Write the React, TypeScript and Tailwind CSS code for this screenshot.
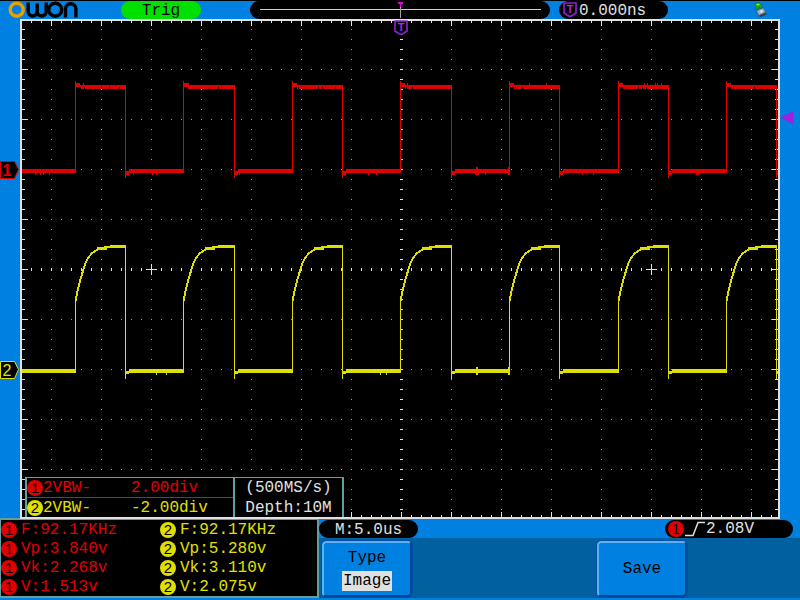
import React from "react";

const MONO = "font-['Liberation_Mono',monospace] text-[16px] leading-[20px] whitespace-pre";

const RED = "#e00000";
const YELLOW = "#e0e000";
const LIGHT = "#e0e0e0";

type Edge = { rise: number; fall: number };

const edges: Edge[] = [
  { rise: 75, fall: 125 },
  { rise: 183, fall: 234 },
  { rise: 292, fall: 342 },
  { rise: 400, fall: 451 },
  { rise: 509, fall: 559 },
  { rise: 618, fall: 668 },
  { rise: 726, fall: 776 },
];

const range = (from: number, to: number, step: number) => {
  const out: number[] = [];
  for (let v = from; v <= to; v += step) out.push(v);
  return out;
};

const box = (x: number, y: number, w: number, h: number) => `M${x} ${y}h${w}v${h}h${-w}z`;

const xs = range(31, 771, 10);
const ys = range(29, 509, 10);
const columns = range(51, 751, 50);
const rows = range(69, 469, 50);

const dots = [
  ...columns.filter((x) => x !== 401).flatMap((x) => ys.map((y) => box(x, y, 1, 1))),
  ...rows.filter((y) => y !== 269).flatMap((y) => xs.map((x) => box(x, y, 1, 1))),
].join("");

const ticks = [
  ...xs.map((x) => box(x, 268, 1, 3)),
  ...ys.map((y) => box(400, y, 3, 1)),
  ...xs.map((x) => box(x, 21, 1, columns.includes(x) ? 5 : 2)),
  ...xs.map((x) => box(x, columns.includes(x) ? 512 : 515, 1, columns.includes(x) ? 5 : 2)),
  ...ys.map((y) => box(22, y, rows.includes(y) ? 6 : 3, 1)),
  ...ys.map((y) => box(rows.includes(y) ? 772 : 775, y, rows.includes(y) ? 6 : 3, 1)),
  ...[151, 651].map((x) => box(x - 5, 269, 11, 1) + box(x, 264, 1, 11)),
].join("");

const lowSegments = edges.map((e, i) => {
  const start = i === 0 ? 22 : edges[i - 1].fall + 4;
  return { start, width: e.rise - start };
});

const redTrace = [
  ...lowSegments.map((s) => box(s.start, 169, s.width, 4)),
  ...edges.map(
    (e) =>
      box(e.rise, 81, 1, 92) +
      box(e.rise, 83, 5, 4) +
      box(e.rise + 5, 85, e.fall - e.rise - 4, 4) +
      box(e.fall, 85, 1, 93) +
      box(e.fall, 171, e.fall > 770 ? 2 : 4, 4),
  ),
  ...[35, 40, 43, 49, 133, 152, 156, 239, 368, 376, 485, 582, 593, 696, 698].map((x) => box(x, 173, 1, 2)),
  ...[83, 188, 407, 529, 546, 644, 647, 655, 657, 661].map((x) => box(x, 83, 1, 2)),
  box(476, 167, 2, 2),
  box(475, 173, 4, 2),
  box(508, 167, 2, 8),
].join("");

const redGaps = [80, 84, 101, 109, 119, 218, 298, 318, 322, 335, 406, 412, 515, 517, 522, 622, 638, 642, 646, 651, 733, 754]
  .map((x) => box(x, 87, 1, 2))
  .join("");

const yellowTrace = [
  ...lowSegments.map((s) => box(s.start, 369, s.width, 4)),
  ...edges.map(
    (e) =>
      box(e.rise, 296, 1, 77) +
      box(e.rise, 296, 2, 5) +
      box(e.rise + 22, 247, 10, 3) +
      box(e.rise + 30, 246, e.fall - e.rise - 29, 2) +
      box(e.rise + 35, 245, e.fall - e.rise - 34, 3) +
      box(e.fall, 247, 1, 132) +
      box(e.fall, 371, e.fall > 770 ? 2 : 4, 3),
  ),
  box(476, 367, 2, 8),
  box(508, 367, 2, 8),
  box(156, 373, 1, 2),
  box(166, 373, 1, 2),
  box(380, 373, 1, 2),
  box(386, 373, 1, 2),
].join("");

const chargeCurve = edges
  .map((e) => `M${e.rise + 1} 298l2 -9l2 -8l3 -10l2 -7l3 -6l4 -5l5 -3l5 -2l5 -1`)
  .join("");

function Shield({ x, y }: { x: number; y: number }) {
  return (
    <g transform={`translate(${x} ${y})`}>
      <path d="M1 1h12v10l-3 2l-3 1.5l-3 -1.5l-3 -2z" fill="#000" stroke="#9020d8" strokeWidth="1.6" />
      <text x="7" y="11" textAnchor="middle" fontSize="11" fontWeight="bold" fontFamily="Liberation Sans, sans-serif" fill="#a828e8">
        T
      </text>
    </g>
  );
}

function ChannelFlag({ y, label, color }: { y: number; label: string; color: string }) {
  return (
    <g>
      <path d={`M0.5 ${y + 0.5}h14l4 8l-4 9h-14z`} fill="#000" stroke={color} />
      <text x="7" y={y + 15} textAnchor="middle" fontSize="16" fontWeight={label === "1" ? "bold" : "normal"} fontFamily="Liberation Sans, sans-serif" fill={color}>
        {label}
      </text>
    </g>
  );
}

function Plot() {
  return (
    <svg viewBox="0 19 800 500" className="block h-auto w-full" role="img" aria-label="Channel waveforms">
      <rect x="20" y="19" width="760" height="500" fill={LIGHT} />
      <rect x="22" y="21" width="756" height="496" fill="#000" />
      <g shapeRendering="crispEdges">
        <path d={dots} fill="#a0a0a0" />
        <path d={ticks} fill={LIGHT} />
        <path d={redTrace} fill={RED} />
        <path d={redGaps} fill="#000" />
        <path d={yellowTrace} fill={YELLOW} />
        <path d={chargeCurve} fill="none" stroke={YELLOW} strokeWidth="2" />
      </g>
      <Shield x={394} y={20} />
      <ChannelFlag y={161} label="1" color={RED} />
      <ChannelFlag y={361} label="2" color={YELLOW} />
      <path d="M780 117.500L793 111.500V124z" fill="#a020e0" stroke="#6040e0" strokeWidth="0.5" />
    </svg>
  );
}

function Badge({ channel }: { channel: 1 | 2 }) {
  return (
    <span
      className={
        "flex h-4 w-4 shrink-0 items-center justify-center rounded-full font-['Liberation_Sans',sans-serif] text-[15px] leading-4 text-black " +
        (channel === 1 ? "bg-[#e00000]" : "bg-[#e0e000]")
      }
    >
      {channel}
    </span>
  );
}

function Logo() {
  return (
    <svg viewBox="8 1 71 18" className="h-[18px] w-[71px]" fill="none" stroke="#000" strokeWidth="3.4" role="img" aria-label="OWON">
      <circle cx="16.700" cy="9.700" r="6.500" stroke="#e8a000" />
      <path d="M28.200 2.500v9a4.500 4.500 0 0 0 9 0v-8v8a4.500 4.500 0 0 0 9 0v-9" />
      <circle cx="55.200" cy="9.700" r="6.500" />
      <path d="M65.500 17.500v-8.500a5.200 5.200 0 0 1 10.400 0v8.500" />
    </svg>
  );
}

function Header() {
  return (
    <header className="grid h-[19px] grid-cols-[1fr_300px_1fr] border-t border-black bg-[#0080e0]">
      <div className="flex h-[18px] items-center gap-[42px] pl-2">
        <Logo />
        <div className={"h-[18px] w-20 rounded-full bg-[#00e000] text-center text-black " + MONO}>Trig</div>
      </div>
      <div className="h-[18px] rounded-full bg-black">
        <svg viewBox="250 1 300 18" className="block h-[18px] w-full" shapeRendering="crispEdges" aria-hidden="true">
          <path d="M260 9h281v1h-281z" fill="#e0e040" />
          <path d="M400 4h1v14h-1z" fill="#a0a0a0" />
          <path d="M398 2h5v2h-5zM400 4h1v3h-1z" fill="#e000e0" />
        </svg>
      </div>
      <div className="flex h-[18px] items-center justify-between pr-8 pl-[9px]">
        <div className="flex h-[18px] w-[109px] gap-0.5 rounded-full bg-black pl-1 text-[#e0e0e0]">
          <svg viewBox="0 0 14 16" className="mt-px h-4 w-3.5 shrink-0" aria-hidden="true">
            <Shield x={0} y={0} />
          </svg>
          <span className={MONO}>0.000ns</span>
        </div>
        <svg viewBox="0 0 15 16" className="h-4 w-[15px]" aria-hidden="true">
          <path d="M3 9L10 5L14 12L7 15.500z" fill="#506078" />
          <path d="M4 9L10 6L12 10L6 13z" fill="#a8b0c0" />
          <path d="M7 9l2 -1l1 2l-2 1z" fill="#e8e8f0" />
          <path d="M6 14l7 -3l1 1l-6 3z" fill="#303848" />
          <path d="M1 2L6 0.500L9 3V7L6 5L5 8L2 6L3 4z" fill="#20a818" stroke="#106010" strokeWidth="0.5" />
          <path d="M3 2L6 1.500L7 3L4 3.500z" fill="#80f050" />
        </svg>
      </div>
    </header>
  );
}

function ScaleInfo() {
  return (
    <div className="absolute bottom-0.5 left-[25px] flex h-10 border-t border-[#60a0a0]">
      <div className="w-[210px] border-x-2 border-[#60a0a0] bg-black">
        <div className="flex h-5 items-center border-b border-[#0060a0] text-[#e00000]">
          <Badge channel={1} />
          <span className={"w-[88px] " + MONO}>2VBW-</span>
          <span className={MONO}>2.00div</span>
        </div>
        <div className="flex h-[19px] items-center text-[#e0e000]">
          <Badge channel={2} />
          <span className={"w-[88px] " + MONO}>2VBW-</span>
          <span className={MONO}>-2.00div</span>
        </div>
      </div>
      <div className={"w-[109px] border-r-2 border-[#60a0a0] bg-black text-center text-[#e0e0e0] " + MONO}>
        <div className="h-5">(500MS/s)</div>
        <div>Depth:10M</div>
      </div>
    </div>
  );
}

const measurements: [string, string][] = [
  ["F:92.17KHz", "F:92.17KHz"],
  ["Vp:3.840v", "Vp:5.280v"],
  ["Vk:2.268v", "Vk:3.110v"],
  ["V:1.513v", "V:2.075v"],
];

function Measurements() {
  return (
    <div className="w-[319px] shrink-0 border-y-2 border-r-2 border-l border-[#60a0a0] bg-black">
      <table className="w-full table-fixed border-collapse">
        <tbody>
          {measurements.map(([first, second]) => (
            <tr key={first} className="h-[19px]">
              <td className="p-0">
                <div className="flex h-[19px] items-center gap-1 text-[#e00000]">
                  <Badge channel={1} />
                  <span className={MONO}>{first}</span>
                </div>
              </td>
              <td className="p-0">
                <div className="flex h-[19px] items-center gap-1 pl-px text-[#e0e000]">
                  <Badge channel={2} />
                  <span className={MONO}>{second}</span>
                </div>
              </td>
            </tr>
          ))}
        </tbody>
      </table>
    </div>
  );
}

const MENU_BUTTON =
  "flex h-14 w-[90px] flex-col items-center justify-center rounded-sm border-2 border-t-[#60b0f0] border-l-[#60b0f0] border-r-[#004890] border-b-[#004890] bg-[#0080e0] text-black outline-1 outline-[#0050b0] ";

function Footer() {
  return (
    <footer className="flex h-[81px] bg-[#0080e0]">
      <div className="-mt-px flex h-20">
        <Measurements />
      </div>
      <div className="flex flex-1 flex-col">
        <div className="flex h-[19px] justify-between pt-px pr-[7px]">
          <div className={"h-[18px] w-[99px] rounded-full bg-black text-center text-[#e0e0e0] " + MONO}>M:5.0us</div>
          <div className="flex h-[18px] w-32 items-center rounded-full bg-black pl-[3px] text-[#e0e0e0]">
            <Badge channel={1} />
            <svg viewBox="0 0 22 18" className="h-[18px] w-[22px] shrink-0" aria-hidden="true">
              <path d="M1 15.500H9L14 2.500H21" fill="none" stroke="#e0e0e0" strokeWidth="1.500" />
            </svg>
            <span className={MONO}>2.08V</span>
          </div>
        </div>
        <div className="grid h-[60px] grid-cols-[275px_1fr] items-end bg-[#0060a0] pb-px pl-[3px]">
          <button type="button" className={MENU_BUTTON + MONO}>
            <span className="h-[23px]">Type</span>
            <span className="h-5 bg-[#e0e0e0] px-px">Image</span>
          </button>
          <button type="button" className={MENU_BUTTON + MONO}>
            Save
          </button>
        </div>
      </div>
    </footer>
  );
}

export default function App() {
  return (
    <main className="min-h-screen bg-[#0080e0]">
      <Header />
      <section className="relative">
        <Plot />
        <ScaleInfo />
      </section>
      <Footer />
    </main>
  );
}
